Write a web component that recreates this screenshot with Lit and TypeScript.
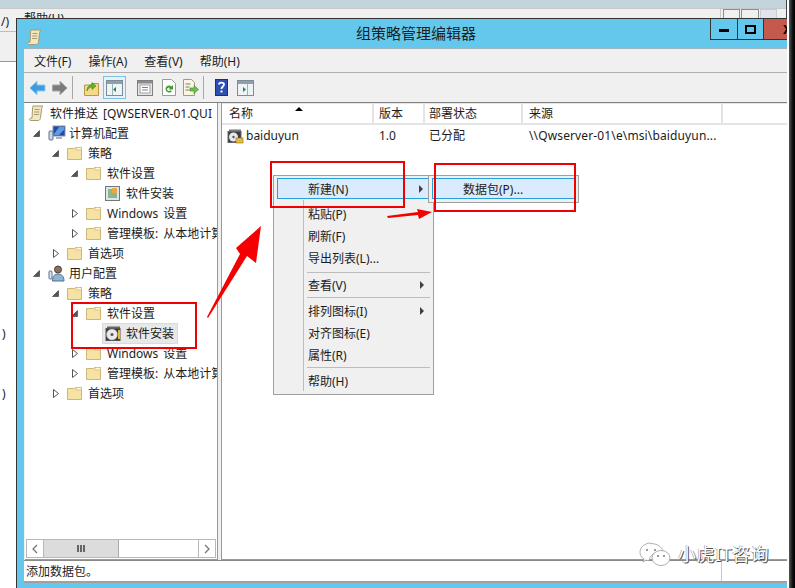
import { LitElement, html, css, svg } from "lit";
import { customElement } from "lit/decorators.js";

type Row = { depth: number; arrow: "" | "open" | "closed"; icon: string; text: string; sel?: boolean };

const ROWS: Row[] = [
  { depth: 0, arrow: "", icon: "scroll", text: "软件推送 [QWSERVER-01.QUI" },
  { depth: 1, arrow: "open", icon: "pc", text: "计算机配置" },
  { depth: 2, arrow: "open", icon: "folder", text: "策略" },
  { depth: 3, arrow: "open", icon: "folder", text: "软件设置" },
  { depth: 4, arrow: "", icon: "pkg", text: "软件安装" },
  { depth: 3, arrow: "closed", icon: "folder", text: "Windows 设置" },
  { depth: 3, arrow: "closed", icon: "folder", text: "管理模板: 从本地计算机" },
  { depth: 2, arrow: "closed", icon: "folder", text: "首选项" },
  { depth: 1, arrow: "open", icon: "user", text: "用户配置" },
  { depth: 2, arrow: "open", icon: "folder", text: "策略" },
  { depth: 3, arrow: "open", icon: "folder", text: "软件设置" },
  { depth: 4, arrow: "", icon: "cd", text: "软件安装", sel: true },
  { depth: 3, arrow: "closed", icon: "folder", text: "Windows 设置" },
  { depth: 3, arrow: "closed", icon: "folder", text: "管理模板: 从本地计算机" },
  { depth: 2, arrow: "closed", icon: "folder", text: "首选项" },
];

const COLS = [
  { t: "名称", w: 152, p: 7 },
  { t: "版本", w: 51, p: 5 },
  { t: "部署状态", w: 98, p: 4 },
  { t: "来源", w: 200, p: 6 },
];

const scrollIcon = svg`<svg width="15" height="16" viewBox="0 0 15 16"><path d="M4 1h10c-1 1-1.500 2-1.500 4l-1 7.500c0 1.500-.7 2.500-2 3H1.500c-1-.2-1.300-1.800-.2-2.300H3L3.500 4C3.500 3 3.500 2 4 1z" fill="#f4e6bd" stroke="#a59a74"/><path d="M5.500 4.500h5M5.300 7h5M5 9.500h5" stroke="#a59a74" fill="none"/></svg>`;
const folderIcon = svg`<svg width="15" height="14" viewBox="0 0 15 14"><path d="M.5 2.500V13.500h14V1.500H8.500L7.500 2.500z" fill="#f7e2a6" stroke="#cdb67a"/><path d="M9 1.500h5.500V4H9z" fill="#fff6d8" stroke="#cdb67a" stroke-width=".7"/></svg>`;
const pcIcon = svg`<svg width="18" height="16" viewBox="0 0 18 16"><rect x="1" y="6" width="4" height="9" rx="1" fill="#cfd8e4" stroke="#5a7099"/><rect x="5" y="1" width="12" height="10" fill="#1f4aa8" stroke="#8d97a8"/><path d="M6 9l5-7h5v3l-5 5H6z" fill="#5f9ae0"/><path d="M8 12h6v2H8z" fill="#aab2bd"/></svg>`;
const userIcon = svg`<svg width="18" height="17" viewBox="0 0 18 17"><circle cx="10" cy="4.500" r="3.500" fill="#8a6f5c" stroke="#4e4038"/><path d="M4.500 16c0-5 2-7 5.500-7s6 2 6 7z" fill="#8fb3d4" stroke="#4f6f8f"/><rect x="1" y="6" width="3" height="8" rx="1" fill="#dfe7ef" stroke="#5a7099"/></svg>`;
const pkgIcon = svg`<svg width="15" height="16" viewBox="0 0 15 16"><rect x=".5" y="1.500" width="14" height="14" fill="#dde5e5" stroke="#6c7a7c"/><rect x="3" y="4" width="9" height="9" fill="#8db58f"/><rect x="7" y="3" width="5" height="5" fill="#e8a848"/></svg>`;
const cdIcon = svg`<svg width="17" height="16" viewBox="0 0 17 16"><path d="M2 2.500h13" stroke="#666" stroke-width="2"/><rect x="1" y="3.500" width="14" height="12" fill="#34393b" stroke="#555"/><circle cx="7" cy="9.500" r="5.500" fill="#e9e9ee" stroke="#999" stroke-width=".5"/><circle cx="7" cy="9.500" r="1.500" fill="#555"/><path d="M14 5v9" stroke="#e6b93e" stroke-width="2"/></svg>`;
const listIcon = svg`<svg width="17" height="17" viewBox="0 0 17 17"><path d="M2 3.500h12" stroke="#777" stroke-width="2"/><rect x="1" y="4.500" width="13" height="11" fill="#3a3f42" stroke="#666"/><circle cx="6.500" cy="10" r="4.500" fill="#e8e8ec"/><circle cx="6.500" cy="10" r="1.200" fill="#555"/><rect x="9" y="11" width="7" height="5" fill="#e2bc4a" stroke="#8a6d1e" stroke-width=".6"/></svg>`;

const icons: Record<string, unknown> = {
  scroll: scrollIcon, folder: folderIcon, pc: pcIcon, user: userIcon, pkg: pkgIcon, cd: cdIcon,
};

const tb = {
  back: svg`<svg width="17" height="16" viewBox="0 0 17 16"><path d="M.8 8L8 1.200V5h8v6H8v3.800z" fill="#3f9be0" stroke="#8ccaf2"/></svg>`,
  fwd: svg`<svg width="16" height="16" viewBox="0 0 16 16"><path d="M15.200 8L8 1.200V5H.5v6H8v3.800z" fill="#7b7b7b" stroke="#a8a8a8"/></svg>`,
  up: svg`<svg width="15" height="16" viewBox="0 0 15 16"><path d="M.5 5V15.500h14V3.500H8L7 5z" fill="#f4d98a" stroke="#b69a4a"/><path d="M3 11c0-4 2-6 5-6V2.500L12 6 8 9.500V7C6 7 4 8.500 3 11z" fill="#6ab42d" stroke="#3d7f14" stroke-width=".6"/></svg>`,
  tree: svg`<svg width="17" height="16" viewBox="0 0 17 16"><rect x=".5" y=".5" width="16" height="15" fill="#eef3f5" stroke="#7c8c96"/><rect x="1" y="1" width="15" height="3" fill="#8fa0ac"/><path d="M6.500 4v11" stroke="#9fb0ba"/><path d="M10 7l-3 2.500 3 2.500z" fill="#1d8a4a"/></svg>`,
  doc: svg`<svg width="16" height="16" viewBox="0 0 16 16"><rect x=".5" y=".5" width="15" height="15" fill="#e6e6e6" stroke="#7f7f7f"/><rect x="1" y="1" width="14" height="2.500" fill="#8c8c8c"/><rect x="3" y="5" width="10" height="8" fill="#fff" stroke="#a0a0a0"/><path d="M5 7.500h6M5 10h6" stroke="#5f89b5"/></svg>`,
  refresh: svg`<svg width="14" height="17" viewBox="0 0 14 17"><path d="M.5.500h9l4 4v12H.5z" fill="#fff" stroke="#9a9a9a"/><path d="M3.500 10a3.500 3.500 0 0 1 6-2.500L11 6v4.500H6.500L8 9a2 2 0 0 0-3 1 2 2 0 0 0 3.600 1.200l1.300 1A3.600 3.600 0 0 1 3.500 10z" fill="#3e9b2e"/></svg>`,
  exp: svg`<svg width="16" height="17" viewBox="0 0 16 17"><path d="M.5.500h8l3 3v13H.5z" fill="#fbf6e4" stroke="#a09a80"/><path d="M2.500 5h5M2.500 8h4M2.500 11h4" stroke="#777"/><path d="M15.500 10.500L11 6.500V9H7v3h4v2.500z" fill="#6fc04a" stroke="#3d8a22" stroke-width=".6"/></svg>`,
  help: svg`<svg width="13" height="17" viewBox="0 0 13 17"><rect x=".5" y=".5" width="12" height="16" fill="#2f4fb0" stroke="#1c2f7a"/><path d="M4 5.500C4 3 9 3 9 5.500 9 7.500 6.500 7.500 6.500 10" fill="none" stroke="#fff" stroke-width="1.800"/><rect x="5.500" y="11.500" width="2" height="2" fill="#fff"/></svg>`,
  view: svg`<svg width="17" height="16" viewBox="0 0 17 16"><rect x=".5" y=".5" width="16" height="15" fill="#eef3f5" stroke="#7c8c96"/><rect x="1" y="1" width="15" height="3" fill="#8fa0ac"/><path d="M10.500 4v11" stroke="#9fb0ba"/><path d="M6 7l3 2.500L6 12z" fill="#1d8a4a"/></svg>`,
};

@customElement("app-root")
export class AppRoot extends LitElement {
  static styles = css`
    :host { display: block; width: 795px; height: 588px; font-family: "Noto Sans", "Noto Sans CJK SC", sans-serif; font-size: 12px; color: #1c1c1c; }
    .stage { position: relative; width: 795px; height: 588px; overflow: hidden; background: #fff; }

    .bg { position: absolute; left: 0; top: 0; width: 787px; height: 588px; display: flex; flex-direction: column; }
    .bg-top { height: 8px; background: #c3d5dc; flex: none; }
    .bg-menu { background: #f0f0f0; border-top: 1px solid #c8c8c8; display: flex; flex: none; padding: 3px 0 0 24px; line-height: 14px; border-bottom: 1px solid #bdbdbd; box-sizing: border-box; height: 24px; }
    .bg-tool { height: 29px; background: #f0f0f0; border-bottom: 1px solid #9a9a9a; flex: none; }
    .bg-body { flex: 1; background: #fff; padding-left: 2px; }
    .bg-body div { height: 60px; line-height: 60px; }
    .bg-body .first { margin-top: 242px; }
    .bg-left { position: absolute; left: 1px; top: 13px; }
    .bg-btns { position: absolute; left: 720px; top: 9px; display: flex; height: 9px; width: 58px; border-left: 1px solid #c8c8c8; padding-left: 2px; box-sizing: border-box; }
    .bg-btns i { width: 18px; border: 1px solid #8c8c8c; border-bottom: none; margin-right: 1px; box-sizing: border-box; }
    .bg-btns i:last-child { border-color: #c8ccd4; background: #dfe3ea; }
    .edge { position: absolute; left: 786px; top: 0; width: 1px; height: 18px; background: #444; }
    .band { position: absolute; left: 789px; top: 0; width: 6px; height: 588px; background: linear-gradient(90deg, #54595c, #111 60%, #000); }

    .win { position: absolute; left: 16px; top: 18px; width: 771px; height: 570px; box-sizing: border-box; background: #63c8ec; border-left: 1px solid #333; border-top: 1px solid #333; display: flex; flex-direction: column; }
    .title { height: 29px; flex: none; position: relative; display: flex; justify-content: center; line-height: 28px; font-size: 15px; padding-left: 28px; }
    .title .ico { position: absolute; left: 10px; top: 6px; }
    .caps { position: absolute; right: 0; top: 0; display: flex; height: 21px; border-bottom: 1px solid #333; border-left: 1px solid #333; box-sizing: border-box; overflow: hidden; }
    .cap { width: 27px; display: flex; align-items: center; justify-content: center; border-right: 1px solid #333; box-sizing: border-box; }
    .cap.wide { width: 26px; }
    .cap.close { width: 23px; background: #c45a4e; border: none; justify-content: flex-start; padding-left: 19px; box-sizing: border-box; font-size: 13px; font-weight: 700; color: #000; }
    .min { width: 10px; height: 3px; background: #000; margin-top: 3px; }
    .max { width: 7px; height: 5px; border: 2px solid #000; }

    .client { margin: 0 0 5px 7px; flex: 1; display: flex; flex-direction: column; min-height: 0; background: #f0f0f0; border-top: 1px solid #9fb4bf; }
    .menubar { height: 23px; flex: none; display: flex; gap: 17px; padding-left: 10px; align-items: center; border-bottom: 1px solid #b0b0b0; }
    .toolbar { height: 29px; flex: none; display: flex; align-items: center; padding-left: 5px; border-bottom: 1px solid #808080; position: relative; }
    .tbtn { display: flex; align-items: center; justify-content: center; }
    .tsep { width: 1px; height: 23px; background: #a8a8a8; }
    .tbtn.on { width: 23px; height: 23px; box-sizing: border-box; border: 1px solid #7cc0e8; background: #e6f2fa; }

    .panes { flex: 1; display: flex; min-height: 0; gap: 3px; padding-left: 1px; border-bottom: 1px solid #8a8a8a; }
    .left { width: 193px; box-sizing: border-box; background: #fff; border-right: 1px solid #9a9a9a; border-bottom: 1px solid #9a9a9a; display: flex; flex-direction: column; }
    .tree { flex: 1; overflow: hidden; }
    .row { height: 20px; display: flex; align-items: center; white-space: nowrap; word-spacing: 2px; }
    .arrow { width: 9px; height: 20px; flex: none; display: flex; align-items: center; justify-content: center; }
    .ricon { flex: none; display: flex; margin-right: 6px; margin-left: 7px; }
    .row.root .ricon { margin-left: 3px; }
    .ricon.pc, .ricon.user { margin-right: 3px; }
    .ricon.cd { margin-right: 4px; }
    .wrap { display: flex; align-items: center; }
    .row.sel .wrap { background: #e8e8e8; outline: 1px solid #dadada; height: 19px; margin-left: 5px; padding-right: 3px; }
    .row.sel .ricon { margin-left: 2px; }
    .hs { height: 17px; margin: 0 1px 1px 1px; border: 1px solid #b8b8b8; display: flex; flex: none; background: #fff; }
    .hs .btn { width: 16px; display: flex; align-items: center; justify-content: center; border-right: 1px solid #b8b8b8; }
    .hs .thumb { width: 74px; background: #dcdcdc; border-right: 1px solid #aaa; display: flex; align-items: center; justify-content: center; gap: 1px; }
    .hs .thumb i { width: 2px; height: 7px; background: #666; }
    .hs .track { flex: 1; }
    .hs .btn.end { border-right: none; border-left: 1px solid #b8b8b8; }

    .right { flex: 1; background: #fff; border-left: 1px solid #9a9a9a; border-bottom: 1px solid #9a9a9a; min-width: 0; }
    .head { display: flex; border-bottom: 2px solid #e4e4e4; border-top: 1px solid #e6e6e6; box-sizing: border-box; position: relative; height: 22px; }
    .hcell { border-right: 2px solid #e4e4e4; box-sizing: border-box; line-height: 20px; }
    .sort { position: absolute; left: 73px; top: 3px; width: 0; height: 0; border-left: 4px solid transparent; border-right: 4px solid transparent; border-bottom: 4px solid #000; }
    .lrow { display: flex; height: 20px; align-items: center; }
    .lname { width: 152px; display: flex; align-items: center; padding-left: 5px; box-sizing: border-box; gap: 2px; }
    .lver { width: 50px; padding-left: 5px; box-sizing: border-box; }
    .lst { width: 100px; padding-left: 5px; box-sizing: border-box; }
    .lsrc { padding-left: 5px; letter-spacing: .13px; }

    .status { height: 20px; flex: none; background: #fff; display: flex; align-items: center; border-bottom: 2px solid #a0a0a0; padding-left: 2px; position: relative; }
    .status .div { position: absolute; left: 697px; top: 0; bottom: 0; width: 1px; background: #c8c8c8; }

    .menu { position: absolute; background: #f0f0f0; border: 1px solid #a0a0a0; box-sizing: border-box; }
    .ctx { left: 273px; top: 175px; width: 161px; height: 220px; padding: 2px 3px; }
    .gutter { position: absolute; left: 29px; top: 24px; bottom: 3px; width: 1px; background: #bdbdbd; }
    .mi { height: 22px; display: flex; align-items: center; padding-left: 31px; position: relative; box-sizing: border-box; }
    .mi.hi { height: 21px; border: 1px solid #26a0da; background: #d9ebfd; padding-left: 30px; }
    .mi.first { margin-bottom: 4px; }
    .caret { position: absolute; right: 6px; top: 6px; width: 0; height: 0; border-top: 4px solid transparent; border-bottom: 4px solid transparent; border-left: 4px solid #404040; }
    .mi:not(.hi) .caret { top: 7px; }
    .msep { height: 1px; background: #bdbdbd; margin: 1px 0 2px 30px; }
    .msep.first { margin: 3px 0 1px 30px; }
    .sub { left: 428px; top: 175px; width: 151px; height: 28px; padding: 2px 3px; }

    .ann { position: absolute; left: 0; top: 0; width: 795px; height: 588px; pointer-events: none; }
    .wm { position: absolute; left: 678px; top: 541px; font-size: 18px; line-height: 26px; color: #fff; letter-spacing: .5px; text-shadow: 1px 1px 0 #555, -0.500px 0 0 #888; white-space: nowrap; }
  `;

  private arrow(kind: string) {
    if (kind === "open") return svg`<svg width="7" height="7" viewBox="0 0 7 7"><path d="M6.500.500V6.500H.500z" fill="#555" stroke="#333" stroke-width=".6"/></svg>`;
    if (kind === "closed") return svg`<svg width="6" height="9" viewBox="0 0 6 9"><path d="M.500.500L5.500 4.500.500 8.500z" fill="#fff" stroke="#555"/></svg>`;
    return "";
  }

  render() {
    return html`<div class="stage">
      <div class="bg">
        <div class="bg-top"></div>
        <div class="bg-menu">帮助(H)</div>
        <div class="bg-tool"></div>
        <div class="bg-body"><div class="first">)</div><div>)</div></div>
      </div>
      <div class="bg-left">/)</div>
      <div class="bg-btns"><i></i><i></i><i></i></div>
      <div class="edge"></div>
      <div class="band"></div>

      <div class="win">
        <div class="title">
          <span class="ico">${scrollIcon}</span>
          组策略管理编辑器
          <div class="caps">
            <div class="cap"><div class="min"></div></div>
            <div class="cap wide"><div class="max"></div></div>
            <div class="cap close">X</div>
          </div>
        </div>
        <div class="client">
          <div class="menubar"><span>文件(F)</span><span>操作(A)</span><span>查看(V)</span><span>帮助(H)</span></div>
          <div class="toolbar">
            <span class="tbtn" style="margin-right:6px">${tb.back}</span>
            <span class="tbtn" style="margin-right:4px">${tb.fwd}</span>
            <span class="tsep" style="margin-right:11px"></span>
            <span class="tbtn" style="margin-right:4px">${tb.up}</span>
            <span class="tbtn on" style="margin-right:11px">${tb.tree}</span>
            <span class="tbtn" style="margin-right:9px">${tb.doc}</span>
            <span class="tbtn" style="margin-right:7px">${tb.refresh}</span>
            <span class="tbtn" style="margin-right:4px">${tb.exp}</span>
            <span class="tsep" style="margin-right:11px"></span>
            <span class="tbtn" style="margin-right:9px">${tb.help}</span>
            <span class="tbtn">${tb.view}</span>
          </div>
          <div class="panes">
            <div class="left">
              <div class="tree">
                ${ROWS.map((r) => html`<div class="row ${r.sel ? "sel" : ""} ${r.depth === 0 ? "root" : ""}" style="padding-left:${r.depth === 0 ? 1 : r.depth * 19 - 12}px">
                  ${r.depth === 0 ? "" : html`<span class="arrow">${this.arrow(r.arrow)}</span>`}
                  <span class="wrap"><span class="ricon ${r.icon}">${icons[r.icon]}</span><span>${r.text}</span></span>
                </div>`)}
              </div>
              <div class="hs">
                <span class="btn"><svg width="6" height="10" viewBox="0 0 6 10"><path d="M5 1L1 5l4 4" fill="none" stroke="#777" stroke-width="1.300"/></svg></span>
                <span class="thumb"><i></i><i></i><i></i></span>
                <span class="track"></span>
                <span class="btn end"><svg width="6" height="10" viewBox="0 0 6 10"><path d="M1 1l4 4-4 4" fill="none" stroke="#777" stroke-width="1.300"/></svg></span>
              </div>
            </div>
            <div class="right">
              <div class="head">
                ${COLS.map((c) => html`<div class="hcell" style="width:${c.w}px;padding-left:${c.p}px">${c.t}</div>`)}
                <span class="sort"></span>
              </div>
              <div class="lrow">
                <div class="lname">${listIcon}<span>baiduyun</span></div>
                <div class="lver">1.0</div>
                <div class="lst">已分配</div>
                <div class="lsrc">\\\\Qwserver-01\\e\\msi\\baiduyun...</div>
              </div>
            </div>
          </div>
          <div class="status">添加数据包。<span class="div"></span></div>
        </div>
      </div>

      <div class="menu ctx">
        <span class="gutter"></span>
        <div class="mi hi first">新建(N)<span class="caret"></span></div>
        <div class="mi">粘贴(P)</div>
        <div class="mi">刷新(F)</div>
        <div class="mi">导出列表(L)...</div>
        <div class="msep first"></div>
        <div class="mi">查看(V)<span class="caret"></span></div>
        <div class="msep"></div>
        <div class="mi">排列图标(I)<span class="caret"></span></div>
        <div class="mi">对齐图标(E)</div>
        <div class="mi">属性(R)</div>
        <div class="msep"></div>
        <div class="mi">帮助(H)</div>
      </div>
      <div class="menu sub"><div class="mi hi">数据包(P)...</div></div>

      <svg class="ann" viewBox="0 0 795 588">
        <g fill="none" stroke="#f00000" stroke-width="2">
          <rect x="271" y="162" width="133" height="45"/>
          <rect x="435" y="164" width="140" height="47"/>
          <rect x="72" y="303" width="124" height="45"/>
        </g>
        <path d="M207 317L240 254 236 248 261 226 256 263 247 256 208 318z" fill="#f40000"/>
        <path d="M387 216L418 212 417 209 432 212 419 219 418 215 388 218z" fill="#f40000"/>
        <g fill="#fff" stroke="#9a9a9a" stroke-width=".8">
          <path d="M651 543c-6 0-11 4-11 9 0 3 1 5 4 7l-1 3 3-2c1 .4 2 .5 3 .6 1-6 6-9 14-9-1-5-6-8-12-8z"/>
          <ellipse cx="661" cy="558" rx="9" ry="7.500"/>
        </g>
        <g fill="#777"><circle cx="647" cy="550" r="1"/><circle cx="655" cy="550" r="1"/><circle cx="658" cy="556" r="1"/><circle cx="664" cy="556" r="1"/></g>
      </svg>
      <div class="wm">小虎IT咨询</div>
    </div>`;
  }
}
